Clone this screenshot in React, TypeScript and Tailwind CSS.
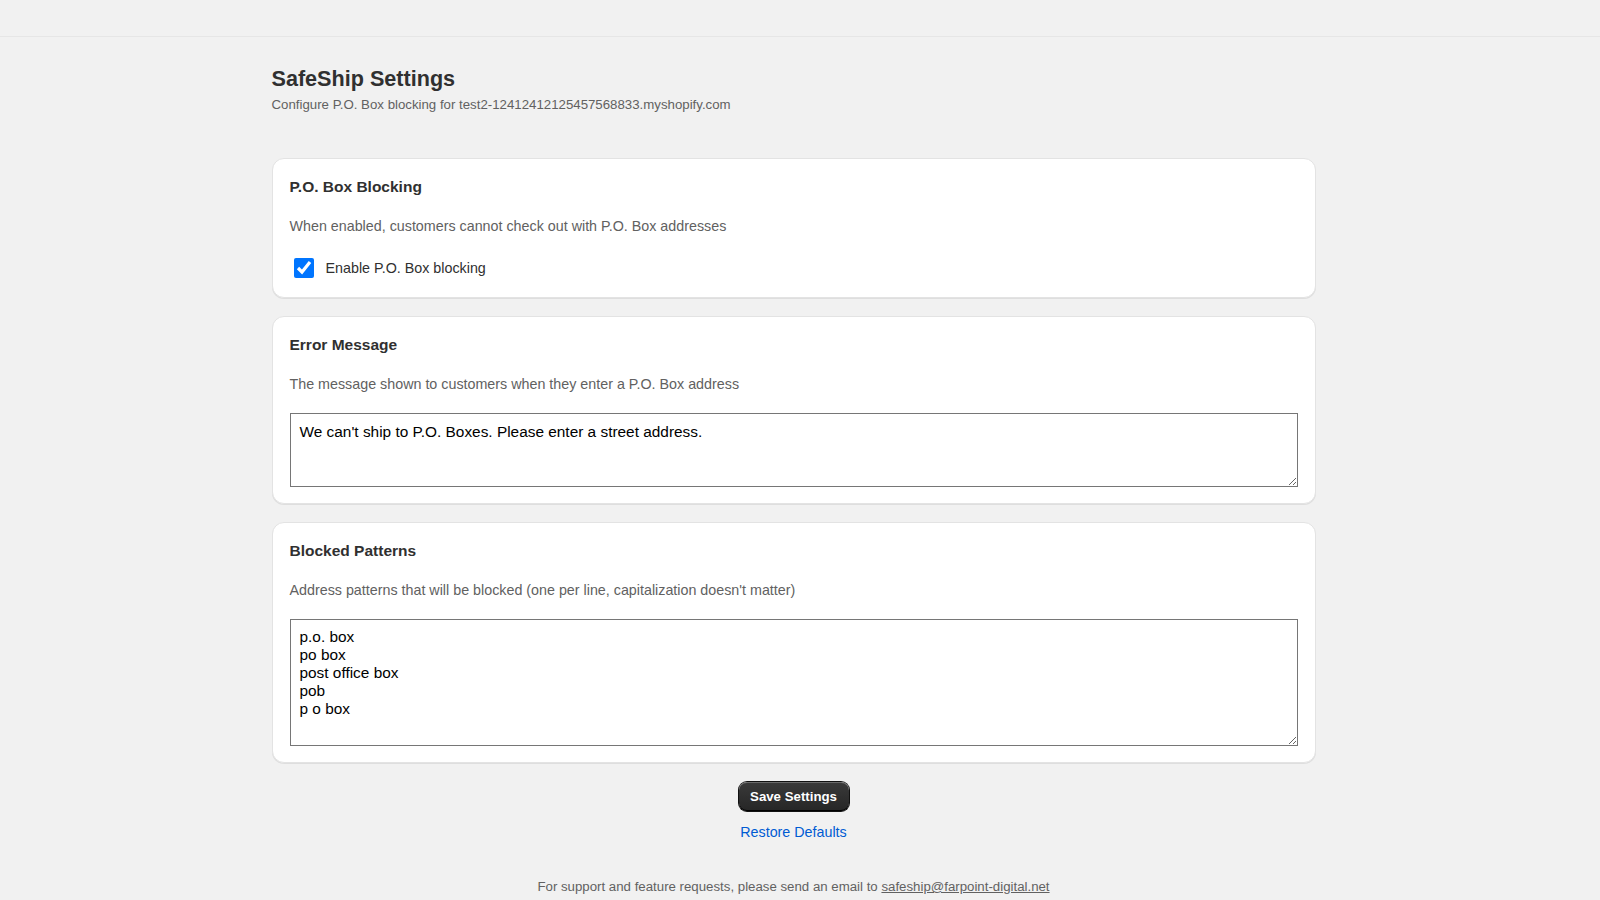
import React from "react";

function Card({ title, desc, children }: { title: string; desc: string; children: React.ReactNode }) {
  return (
    <section className="bg-white border border-[#e3e3e3] rounded-xl shadow-[0_1px_0_rgba(0,0,0,0.08)] px-[17px] pt-[18px] pb-4">
      <h2 className="text-[15.5px] leading-[20px] font-bold text-[#303030]">{title}</h2>
      <p className="mt-[19px] text-[14.3px] leading-5 text-[#616161]">{desc}</p>
      <div className="mt-[19px]">{children}</div>
    </section>
  );
}

export default function App() {
  return (
    <div className="min-h-screen bg-[#f1f1f1] text-[#303030] pb-6" style={{ fontFamily: '"Liberation Sans", Arial, sans-serif' }}>
      <div className="h-[37px] border-b border-[#e6e6e6]" />
      <div className="pr-[13px]">
        <main className="w-[1044px] mx-auto pt-[28px]">
          <h1 className="text-[21.6px] leading-[28px] font-bold text-[#303030]">SafeShip Settings</h1>
          <p className="mt-[3px] text-[13.25px] leading-[18px] text-[#616161]">
            Configure P.O. Box blocking for test2-12412412125457568833.myshopify.com
          </p>

          <div className="mt-[44px] flex flex-col gap-[18px]">
            <Card title="P.O. Box Blocking" desc="When enabled, customers cannot check out with P.O. Box addresses">
              <label className="flex items-center">
                <input type="checkbox" defaultChecked className="w-5 h-5 ml-1 mr-[9px] my-[3px]" />
                <span className="ml-[3px] text-[14.3px] leading-5 text-[#303030]">Enable P.O. Box blocking</span>
              </label>
            </Card>

            <Card title="Error Message" desc="The message shown to customers when they enter a P.O. Box address">
              <textarea
                className="block w-full h-[74px] border border-[#767676] bg-white px-[9px] pt-[9px] pb-[5px] text-[15.4px] leading-[18px] text-black outline-none"
                style={{ fontFamily: '"Liberation Sans", Arial, sans-serif' }}
                defaultValue="We can't ship to P.O. Boxes. Please enter a street address."
              />
            </Card>

            <Card title="Blocked Patterns" desc="Address patterns that will be blocked (one per line, capitalization doesn't matter)">
              <textarea
                className="block w-full h-[127px] border border-[#767676] bg-white px-[9px] pt-[8px] pb-[6px] text-[15.4px] leading-[18.1px] text-black outline-none"
                style={{ fontFamily: '"Liberation Sans", Arial, sans-serif' }}
                defaultValue={"p.o. box\npo box\npost office box\npob\np o box"}
              />
            </Card>
          </div>

          <div className="mt-[19px] flex flex-col items-center">
            <button className="h-[29px] w-[110px] rounded-[8px] bg-gradient-to-b from-[#3a3a3a] to-[#262626] text-white text-[13.25px] font-bold shadow-[0_0_0_1px_#111,inset_0_1px_0_rgba(255,255,255,0.25),inset_0_-1px_0_#000]">
              Save Settings
            </button>
            <button className="mt-[11px] text-[14.3px] leading-5 text-[#005bd3]">Restore Defaults</button>
            <p className="mt-[35px] text-[13.25px] leading-5 text-[#616161]">
              For support and feature requests, please send an email to{" "}
              <a href="#" className="underline">safeship@farpoint-digital.net</a>
            </p>
          </div>
        </main>
      </div>
    </div>
  );
}
